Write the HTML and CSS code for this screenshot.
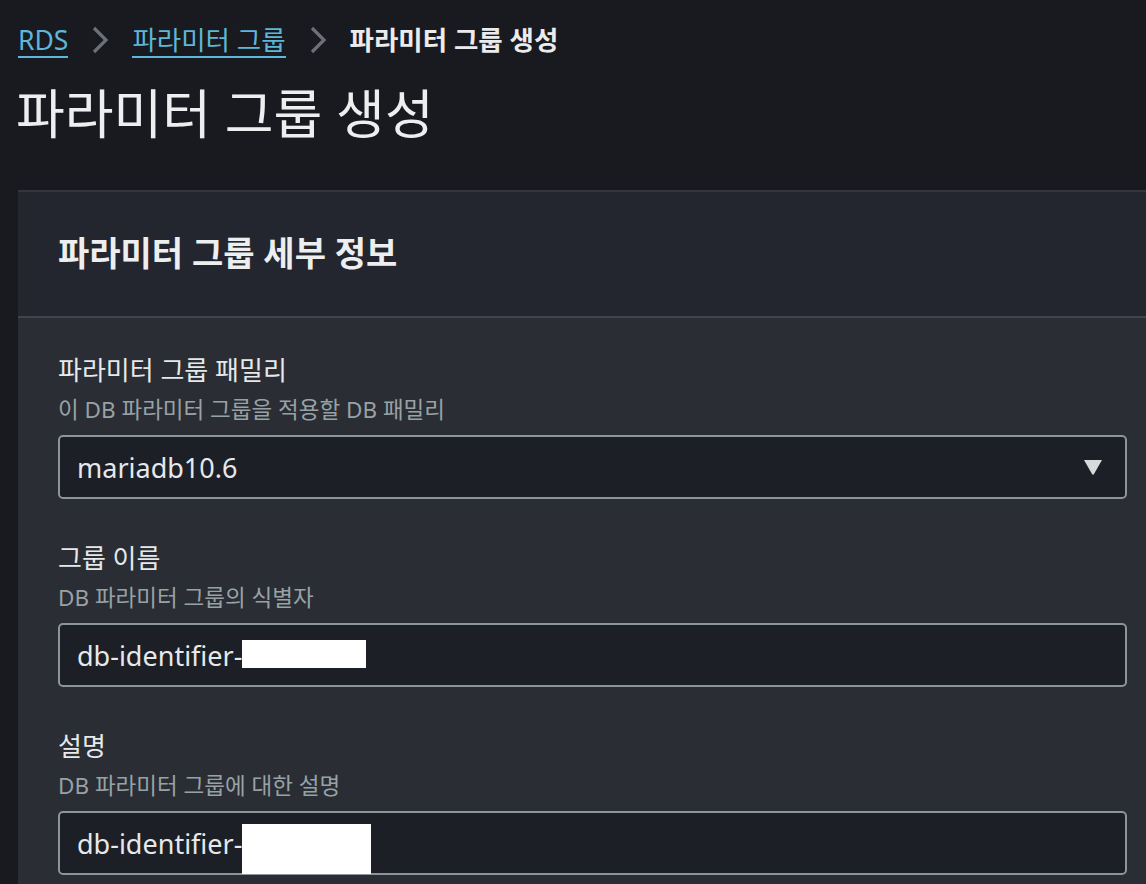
FILE: index.html
```html
<!DOCTYPE html>
<html lang="ko">
<head>
    <meta charset="UTF-8">
    <meta name="viewport" content="width=device-width, initial-scale=1.0">
    <title>파라미터 그룹 생성</title>
    <link rel="stylesheet" href="styles.css">
</head>
<body>
    <div class="page">
        <nav class="breadcrumb">
            <a class="crumb-link" href="#">RDS</a>
            <svg class="chevron" width="18" height="30" viewBox="0 0 18 30">
                <polyline points="3,3 15,15 3,27" fill="none" stroke="#6c7077" stroke-width="3.2" />
            </svg>
            <a class="crumb-link" href="#">파라미터 그룹</a>
            <svg class="chevron" width="18" height="30" viewBox="0 0 18 30">
                <polyline points="3,3 15,15 3,27" fill="none" stroke="#6c7077" stroke-width="3.2" />
            </svg>
            <span class="crumb-current">파라미터 그룹 생성</span>
        </nav>

        <h1 class="page-title">파라미터 그룹 생성</h1>

        <section class="card">
            <div class="card-header">
                <h2>파라미터 그룹 세부 정보</h2>
            </div>
            <div class="card-body">
                <div class="field">
                    <div class="field-label">파라미터 그룹 패밀리</div>
                    <div class="field-desc">이 DB 파라미터 그룹을 적용할 DB 패밀리</div>
                    <div class="select-box">
                        <span>mariadb10.6</span>
                        <svg class="caret" width="20" height="16" viewBox="0 0 20 16">
                            <path d="M1 1 L19 1 L11 15 Q10 16.5 9 15 Z" fill="#d6dadb" />
                        </svg>
                    </div>
                </div>

                <div class="field">
                    <div class="field-label">그룹 이름</div>
                    <div class="field-desc">DB 파라미터 그룹의 식별자</div>
                    <div class="text-input">
                        <span>db-identifier-</span><span class="redact redact-name"></span>
                    </div>
                </div>

                <div class="field">
                    <div class="field-label">설명</div>
                    <div class="field-desc">DB 파라미터 그룹에 대한 설명</div>
                    <div class="text-input">
                        <span>db-identifier-</span><span class="redact redact-desc"></span>
                    </div>
                </div>
            </div>
        </section>
    </div>
</body>
</html>
```

FILE: styles.css
```css
* {
    margin: 0;
    padding: 0;
    box-sizing: border-box;
}

body {
    background: #191a1f;
    color: #e9ebed;
    font-family: "Noto Sans", "Noto Sans CJK KR", sans-serif;
    overflow: hidden;
    height: 884px;
}

.page {
    padding: 20px 0 0 18px;
}

.breadcrumb {
    display: flex;
    align-items: center;
    gap: 23px;
    height: 40px;
    font-size: 26.5px;
}

.crumb-link {
    color: #5db7d8;
    text-decoration: none;
    border-bottom: 2px solid #5db7d8;
    line-height: 32px;
    padding-top: 2px;
}

.crumb-current {
    font-weight: 700;
    color: #e9ebed;
    line-height: 32px;
}

.chevron {
    display: block;
}

.page-title {
    font-size: 53px;
    font-weight: 400;
    line-height: 72px;
    margin-top: 18px;
    margin-left: -2px;
    color: #eceeef;
}

.card {
    margin-top: 40px;
    border-top: 2px solid #34363d;
    background: #2a2d33;
    height: 700px;
}

.card-header {
    background: #23262e;
    height: 126px;
    display: flex;
    align-items: center;
    padding-left: 40px;
    border-bottom: 2px solid #41444c;
}

.card-header h2 {
    font-size: 34px;
    font-weight: 700;
    color: #eceeef;
    margin-top: -6px;
}

.card-body {
    padding: 36px 19px 0 40px;
    display: flex;
    flex-direction: column;
    gap: 43px;
}

.field-label {
    font-size: 26px;
    line-height: 32px;
    color: #e6e8ea;
}

.field-desc {
    font-size: 22.5px;
    line-height: 28px;
    color: #98a2a6;
    margin-top: 10px;
}

.select-box,
.text-input {
    margin-top: 11px;
    height: 64px;
    border: 2px solid #8c9598;
    border-radius: 5px;
    background: #1c1f26;
    display: flex;
    align-items: center;
    padding: 0 22px 0 17px;
    font-size: 27px;
    color: #e6e8ea;
}

.select-box {
    justify-content: space-between;
}

.redact {
    display: inline-block;
    background: #ffffff;
}

.redact-name {
    width: 124px;
    height: 28px;
    margin-top: -2px;
}

.redact-desc {
    width: 129px;
    height: 50px;
    margin-top: 12px;
}
```
